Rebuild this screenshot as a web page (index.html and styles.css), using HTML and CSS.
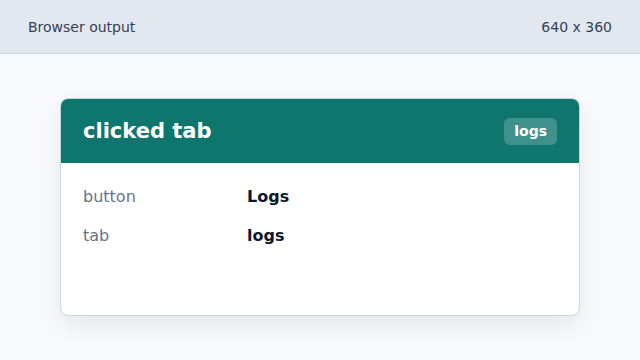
FILE: index.html
```html
<!DOCTYPE html>
<html>
<head>
<meta charset="utf-8">
<link rel="stylesheet" href="styles.css">
</head>
<body>
<div class="topbar">
  <span>Browser output</span>
  <span>640 x 360</span>
</div>
<main class="stage">
  <section class="card">
    <header class="card-head">
      <h1>clicked tab</h1>
      <span class="badge">logs</span>
    </header>
    <div class="card-body">
      <div class="row"><span class="label">button</span><span class="value">Logs</span></div>
      <div class="row"><span class="label">tab</span><span class="value">logs</span></div>
    </div>
  </section>
</main>
</body>
</html>
```
FILE: styles.css
```css
* { box-sizing: border-box; }
html, body { margin: 0; padding: 0; }
body {
  width: 640px;
  height: 360px;
  background: #f8fafc;
  font-family: "DejaVu Sans", sans-serif;
  overflow: hidden;
}
.topbar {
  height: 54px;
  background: #e2e8f0;
  border-bottom: 1px solid #cbd5e1;
  display: flex;
  align-items: center;
  justify-content: space-between;
  padding: 0 28px;
  font-size: 14px;
  color: #334155;
}
.stage {
  padding: 44px 60px 0 60px;
}
.card {
  width: 520px;
  height: 218px;
  background: #fff;
  border: 1px solid #cbd5e1;
  border-radius: 8px;
  overflow: hidden;
  box-shadow: 0 10px 25px rgba(15, 23, 42, 0.08);
}
.card-head {
  height: 64px;
  background: #0f766e;
  display: flex;
  align-items: center;
  justify-content: space-between;
  padding: 0 22px 0 22px;
}
.card-head h1 {
  margin: 0;
  font-size: 21px;
  font-weight: bold;
  color: #fff;
}
.badge {
  background: rgba(255, 255, 255, 0.2);
  color: #fff;
  font-weight: bold;
  font-size: 14px;
  padding: 5px 10px 6px;
  border-radius: 6px;
}
.card-body {
  padding: 24px 22px;
  display: flex;
  flex-direction: column;
  gap: 20px;
}
.row {
  display: flex;
  font-size: 16px;
  line-height: 19px;
}
.label {
  width: 164px;
  color: #64748b;
}
.value {
  font-weight: bold;
  color: #0f172a;
}
```
